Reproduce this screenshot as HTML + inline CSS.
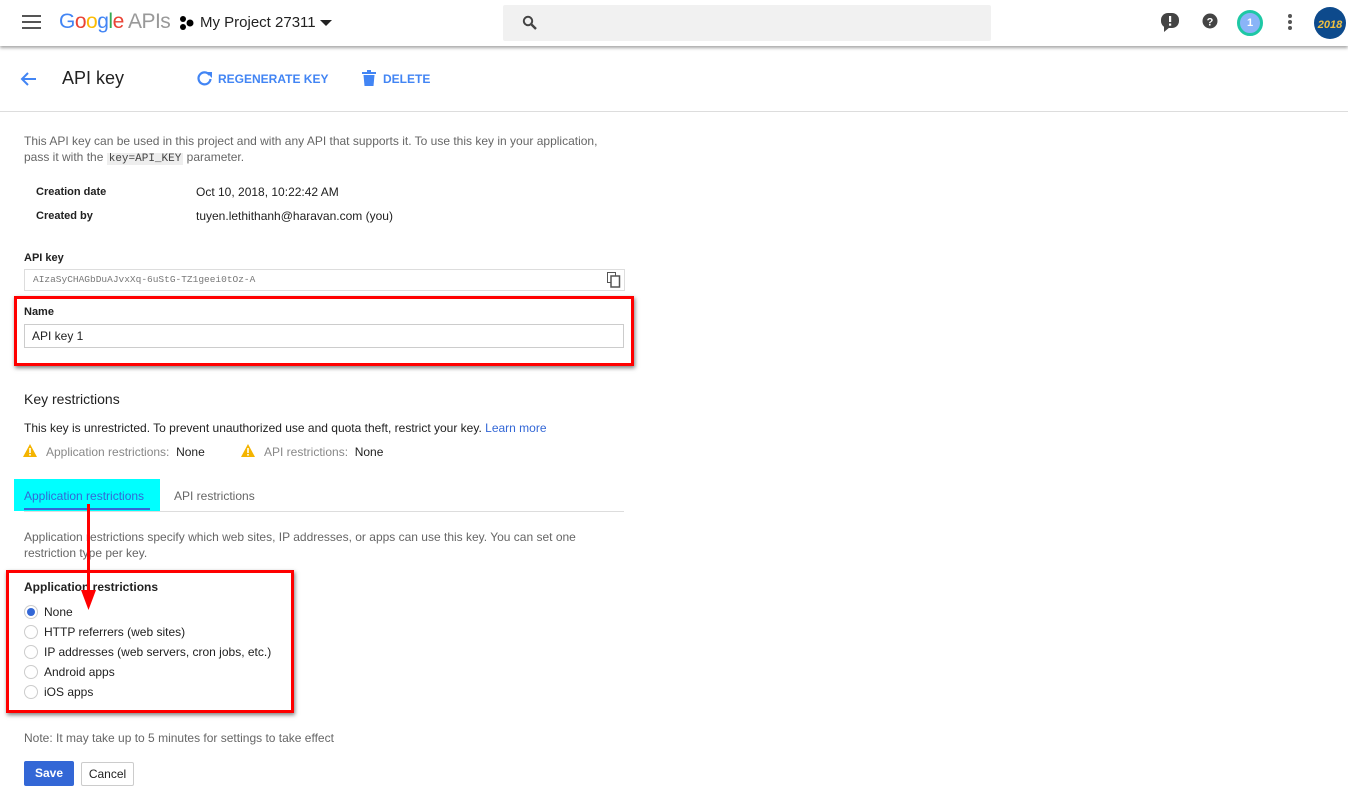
<!DOCTYPE html>
<html><head><meta charset="utf-8"><style>
*{margin:0;padding:0;box-sizing:border-box}
body{width:1348px;height:786px;overflow:hidden;background:#fff;font-family:"Liberation Sans",Arial,sans-serif;color:#212121;position:relative}
.a{position:absolute;white-space:nowrap}
.hdr{position:absolute;left:0;top:0;width:1348px;height:46px;background:#fff;box-shadow:0 2px 3px rgba(0,0,0,.35)}
.s12{font-size:12px}
.g{color:#666}
.b{font-weight:bold;font-size:11px}
.inp{position:absolute;border:1px solid #ddd;background:#fff}
.rb{position:absolute;border:3px solid #f00;box-shadow:1px 2px 4px rgba(0,0,0,.5)}
.rad{position:absolute;left:24px;width:14px;height:14px;border:1px solid #ccc;border-radius:50%}
</style></head><body>
<div class="hdr"></div>
<div class="a" style="left:22px;top:15px;width:19px;height:2px;background:#555;box-shadow:0 6px 0 #555,0 12px 0 #555"></div>
<div class="a" style="left:59px;top:10px;font-size:21px;letter-spacing:-0.5px"><span style="color:#4285f4">G</span><span style="color:#ea4335">o</span><span style="color:#fbbc05">o</span><span style="color:#4285f4">g</span><span style="color:#34a853">l</span><span style="color:#ea4335">e</span> <span style="color:#999">APIs</span></div>
<svg class="a" style="left:179px;top:15px" width="16" height="16"><circle cx="4" cy="4" r="3" fill="#000"/><circle cx="4" cy="12" r="3" fill="#000"/><circle cx="11" cy="8" r="3.5" fill="#000"/></svg>
<div class="a" style="left:200px;top:14px;font-size:15px;color:#222">My Project 27311</div>
<div class="a" style="left:318px;top:20px;margin-left:1px;border:6px solid transparent;border-top:6px solid #222;border-bottom:0;left:319px"></div>
<div class="a" style="left:503px;top:5px;width:488px;height:36px;background:#f1f1f1;border-radius:2px"></div>
<svg class="a" style="left:522px;top:15px" width="16" height="16"><circle cx="6" cy="6" r="4.2" fill="none" stroke="#444" stroke-width="2"/><path d="M9 9l5 5" stroke="#444" stroke-width="2.4"/></svg>
<svg class="a" style="left:1161px;top:13px" width="18" height="20"><rect x="0" y="0" width="18" height="15" rx="7" fill="#444"/><path d="M3 12v7l6-5z" fill="#444"/><rect x="8" y="3" width="2.2" height="6" fill="#fff"/><rect x="8" y="10.5" width="2.2" height="2.2" fill="#fff"/></svg>
<svg class="a" style="left:1202px;top:13px" width="18" height="18"><circle cx="8" cy="8" r="7.5" fill="#444"/><text x="8" y="12.5" font-size="11" font-weight="bold" text-anchor="middle" fill="#fff" font-family="Liberation Sans">?</text></svg>
<div class="a" style="left:1237px;top:10px;width:26px;height:26px;border-radius:50%;background:#8ab4f8;border:3px solid #1ec8a5;color:#fff;font-size:11px;font-weight:bold;text-align:center;line-height:20px">1</div>
<div class="a" style="left:1288px;top:14px;width:4px;height:4px;border-radius:50%;background:#555;box-shadow:0 6px 0 #555,0 12px 0 #555"></div>
<div class="a" style="left:1314px;top:7px;width:32px;height:32px;border-radius:50%;background:#0d4a8c;color:#f0c040;font-size:11px;font-style:italic;font-weight:bold;text-align:center;line-height:36px">2018</div>

<svg class="a" style="left:19px;top:70px" width="18" height="18"><path d="M17 9H3M9 3L3 9l6 6" fill="none" stroke="#4285f4" stroke-width="2"/></svg>
<div class="a" style="left:62px;top:68px;font-size:18px;color:#222">API key</div>
<svg class="a" style="left:196px;top:70px" width="17" height="17"><path d="M13.5 5A6 6 0 1 0 14.5 9" fill="none" stroke="#4285f4" stroke-width="2.2"/><path d="M10 2h6v6z" fill="#4285f4"/></svg>
<div class="a" style="left:218px;top:72px;font-size:12px;font-weight:bold;color:#4285f4">REGENERATE KEY</div>
<svg class="a" style="left:362px;top:70px" width="14" height="16"><rect x="0" y="2" width="14" height="2" fill="#4285f4"/><rect x="5" y="0" width="4" height="3" fill="#4285f4"/><path d="M1.5 5h11l-1 11h-9z" fill="#4285f4"/></svg>
<div class="a" style="left:383px;top:72px;font-size:12px;font-weight:bold;color:#4285f4">DELETE</div>
<div class="a" style="left:0;top:111px;width:1348px;height:1px;background:#ddd"></div>

<div class="a s12 g" style="left:24px;top:134px">This API key can be used in this project and with any API that supports it. To use this key in your application,</div>
<div class="a s12 g" style="left:24px;top:150px">pass it with the <span style="font-family:'Liberation Mono',monospace;font-size:11px;background:#eee;color:#444;padding:0 2px">key=API_KEY</span> parameter.</div>
<div class="a b" style="left:36px;top:186px">Creation date</div>
<div class="a s12" style="left:196px;top:185px">Oct 10, 2018, 10:22:42 AM</div>
<div class="a b" style="left:36px;top:210px">Created by</div>
<div class="a s12" style="left:196px;top:209px">tuyen.lethithanh@haravan.com (you)</div>
<div class="a b" style="left:24px;top:252px">API key</div>
<div class="inp" style="left:24px;top:269px;width:601px;height:22px"></div>
<div class="a" style="left:33px;top:274px;font-family:'Liberation Mono',monospace;font-size:9.5px;color:#777">AIzaSyCHAGbDuAJvxXq-6uStG-TZ1geei0tOz-A</div>
<svg class="a" style="left:607px;top:272px" width="14" height="16"><rect x="0.5" y="0.5" width="8" height="10" fill="none" stroke="#555"/><rect x="4" y="4" width="8.5" height="11" fill="#fff" stroke="#555" stroke-width="1.5"/></svg>
<div class="rb" style="left:14px;top:296px;width:620px;height:70px"></div>
<div class="a b" style="left:24px;top:306px">Name</div>
<div class="inp" style="left:24px;top:324px;width:600px;height:24px;border-color:#ccc"></div>
<div class="a s12" style="left:32px;top:329px">API key 1</div>

<div class="a" style="left:24px;top:391px;font-size:14px">Key restrictions</div>
<div class="a s12" style="left:24px;top:421px">This key is unrestricted. To prevent unauthorized use and quota theft, restrict your key. <span style="color:#3367d6">Learn more</span></div>
<svg class="a" style="left:23px;top:444px" width="14" height="13"><path d="M7 0l7 13H0z" fill="#f4b400"/><rect x="6.2" y="4" width="1.6" height="5" fill="#fff"/><rect x="6.2" y="10" width="1.6" height="1.6" fill="#fff"/></svg>
<div class="a s12" style="left:46px;top:445px;color:#888">Application restrictions:&nbsp; <span style="color:#222">None</span></div>
<svg class="a" style="left:241px;top:444px" width="14" height="13"><path d="M7 0l7 13H0z" fill="#f4b400"/><rect x="6.2" y="4" width="1.6" height="5" fill="#fff"/><rect x="6.2" y="10" width="1.6" height="1.6" fill="#fff"/></svg>
<div class="a s12" style="left:264px;top:445px;color:#888">API restrictions:&nbsp; <span style="color:#222">None</span></div>

<div class="a" style="left:14px;top:479px;width:146px;height:32px;background:#00ffff"></div>
<div class="a s12" style="left:24px;top:489px;color:#3367d6">Application restrictions</div>
<div class="a s12" style="left:174px;top:489px;color:#666">API restrictions</div>
<div class="a" style="left:24px;top:508px;width:126px;height:2px;background:#3367d6"></div>
<div class="a" style="left:24px;top:511px;width:600px;height:1px;background:#ddd"></div>
<div class="a s12 g" style="left:24px;top:530px">Application restrictions specify which web sites, IP addresses, or apps can use this key. You can set one</div>
<div class="a s12 g" style="left:24px;top:546px">restriction type per key.</div>

<div class="rb" style="left:6px;top:570px;width:288px;height:143px"></div>
<div class="a b" style="left:24px;top:580px;font-size:12px">Application restrictions</div>
<div class="rad" style="top:605px;border-color:#ccc"><div style="margin:2px;width:8px;height:8px;border-radius:50%;background:#3367d6"></div></div>
<div class="a s12" style="left:44px;top:605px">None</div>
<div class="rad" style="top:625px"></div><div class="a s12" style="left:44px;top:625px">HTTP referrers (web sites)</div>
<div class="rad" style="top:645px"></div><div class="a s12" style="left:44px;top:645px">IP addresses (web servers, cron jobs, etc.)</div>
<div class="rad" style="top:665px"></div><div class="a s12" style="left:44px;top:665px">Android apps</div>
<div class="rad" style="top:685px"></div><div class="a s12" style="left:44px;top:685px">iOS apps</div>
<svg class="a" style="left:78px;top:504px" width="20" height="106"><rect x="9" y="0" width="3" height="88" fill="#f00"/><path d="M3 86h15l-7.5 20z" fill="#f00"/></svg>

<div class="a s12 g" style="left:24px;top:731px">Note: It may take up to 5 minutes for settings to take effect</div>
<div class="a" style="left:24px;top:761px;width:50px;height:25px;background:#3367d6;border-radius:2px;color:#fff;font-size:12px;font-weight:bold;text-align:center;line-height:25px">Save</div>
<div class="a" style="left:81px;top:762px;width:53px;height:24px;border:1px solid #ccc;border-radius:2px;color:#222;font-size:12px;text-align:center;line-height:22px">Cancel</div>
</body></html>
